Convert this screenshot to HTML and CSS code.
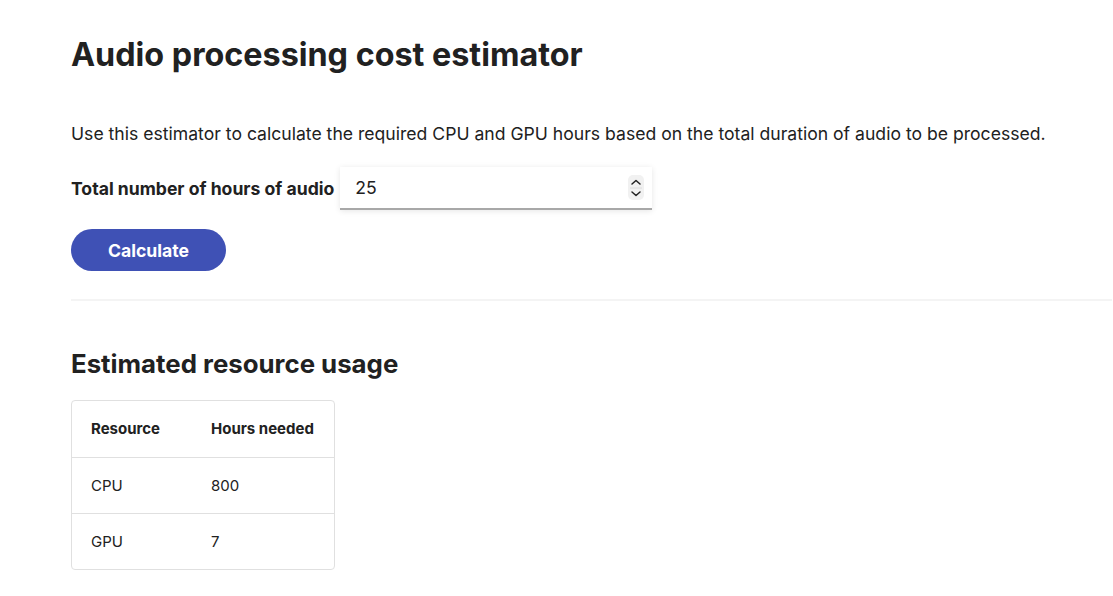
FILE: index.html
```html
<!DOCTYPE html>
<html lang="en">
<head>
<meta charset="utf-8">
<title>Audio processing cost estimator</title>
<link rel="stylesheet" href="styles.css">
</head>
<body>
<main class="page">
  <h1 class="title">Audio processing cost estimator</h1>
  <p class="intro">Use this estimator to calculate the required CPU and GPU hours based on the total duration of audio to be processed.</p>
  <div class="field">
    <label class="field-label" for="hours">Total number of hours of audio</label>
    <div class="input-box">
      <input id="hours" class="input" type="text" value="25">
      <span class="spinner">
        <svg width="16" height="24" viewBox="0 0 16 24" aria-hidden="true">
          <path d="M4 8 L8 4.5 L12 8" fill="none" stroke="#222" stroke-width="1.5" stroke-linecap="round" stroke-linejoin="round"/>
          <line x1="2" y1="12" x2="14" y2="12" stroke="#dcdcdc" stroke-width="1"/>
          <path d="M4 16 L8 19.5 L12 16" fill="none" stroke="#222" stroke-width="1.5" stroke-linecap="round" stroke-linejoin="round"/>
        </svg>
      </span>
    </div>
  </div>
  <button class="btn" type="button">Calculate</button>
  <hr class="divider">
  <h2 class="subtitle">Estimated resource usage</h2>
  <div class="table-wrap">
    <table class="table">
      <thead>
        <tr><th class="col-res">Resource</th><th>Hours needed</th></tr>
      </thead>
      <tbody>
        <tr><td class="col-res">CPU</td><td>800</td></tr>
        <tr><td class="col-res">GPU</td><td>7</td></tr>
      </tbody>
    </table>
  </div>
</main>
</body>
</html>
```
FILE: styles.css
```css
* { box-sizing: border-box; }
html, body { margin: 0; padding: 0; background: #fff; }
body {
  font-family: Inter, "Noto Sans", "Liberation Sans", sans-serif;
  color: #212121;
}
.page {
  padding: 0 1px 0 71px;
  display: flex;
  flex-direction: column;
  align-items: flex-start;
}
.title {
  margin: 35px 0 0;
  font-size: 32.3px;
  line-height: 40px;
  font-weight: 700;
}
.intro {
  margin: 46px 0 0;
  font-size: 17.6px;
  line-height: 26px;
}
.field {
  margin-top: 20px;
  display: flex;
  align-items: center;
  gap: 6px;
}
.field-label {
  font-size: 17.6px;
  font-weight: 700;
}
.input-box {
  width: 312px;
  height: 43px;
  display: flex;
  align-items: center;
  background: #fff;
  border-bottom: 2px solid #a8a8a8;
  box-shadow: 0 1px 6px rgba(0,0,0,0.1);
  padding: 0 16px 0 15px;
}
.input {
  flex: 1;
  border: 0;
  outline: 0;
  font: inherit;
  font-size: 17.6px;
  color: #212121;
  padding: 0;
  background: transparent;
}
.spinner {
  width: 17px;
  height: 25px;
  border-radius: 5px;
  background: #f1f1f1;
  display: flex;
  align-items: center;
  justify-content: center;
}
.btn {
  margin-top: 19px;
  width: 155px;
  height: 42px;
  border: 0;
  border-radius: 21px;
  background: #3f51b5;
  color: #fff;
  font-family: inherit;
  font-size: 17.6px;
  font-weight: 700;
}
.divider {
  align-self: stretch;
  margin: 28px 0 0;
  border: 0;
  height: 2px;
  background: #f4f4f4;
}
.subtitle {
  margin: 47px 0 0;
  font-size: 25.8px;
  line-height: 32px;
  font-weight: 700;
}
.table-wrap {
  margin-top: 20px;
  border: 1px solid #e0e0e0;
  border-radius: 4px;
  overflow: hidden;
}
.table {
  border-collapse: collapse;
  font-size: 15px;
}
.table th, .table td {
  height: 56px;
  padding: 0 20px 0 19px;
  text-align: left;
  vertical-align: middle;
}
.table th { font-weight: 700; }
.table td { font-weight: 400; }
.table tbody tr { border-top: 1px solid #e0e0e0; }
.col-res { width: 120px; }
```
